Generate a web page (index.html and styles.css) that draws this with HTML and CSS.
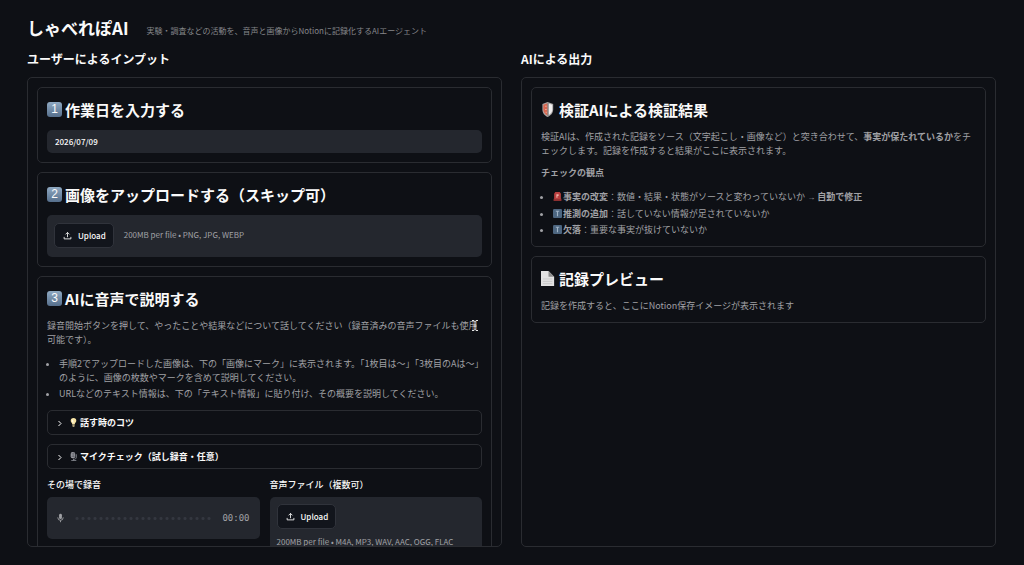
FILE: index.html
```html
<!DOCTYPE html>
<html lang="ja">
  <head>
    <meta charset="UTF-8" />
    <meta name="viewport" content="width=device-width, initial-scale=1.0" />
    <title>しゃべれぽAI</title>
    <link rel="stylesheet" href="styles.css">
  </head>
  <body>
    <header class="header">
      <h1>しゃべれぽAI</h1>
      <p>実験・調査などの活動を、音声と画像からNotionに記録化するAIエージェント</p>
    </header>

    <main class="columns">
      <section class="column">
        <h2>ユーザーによるインプット</h2>
        <div class="panel">
          <div class="card">
            <h3><span class="keycap">1</span><label for="workDate">作業日を入力する</label></h3>
            <input class="date-input" id="workDate" type="text" value="2026/07/09" />
          </div>

          <div class="card">
            <h3><span class="keycap">2</span>画像をアップロードする（スキップ可）</h3>
            <div class="uploader">
              <button class="btn" type="button">
                <svg viewBox="0 0 16 16" aria-hidden="true"><path d="M8 11V2.5M4.5 6L8 2.5 11.5 6M2 10.5V14h12v-3.5" /></svg>
                Upload
              </button>
              <span>200MB per file • PNG, JPG, WEBP</span>
            </div>
          </div>

          <div class="card">
            <h3><span class="keycap">3</span>AIに音声で説明する</h3>
            <div class="text">
              <p>録音開始ボタンを押して、やったことや結果などについて話してください（録音済みの音声ファイルも使用可能です）。</p>
              <ul>
                <li>手順2でアップロードした画像は、下の「画像にマーク」に表示されます。「1枚目は〜」「3枚目のAは〜」のように、画像の枚数やマークを含めて説明してください。</li>
                <li>URLなどのテキスト情報は、下の「テキスト情報」に貼り付け、その概要を説明してください。</li>
              </ul>
              <svg class="cursor" viewBox="0 0 8 13" aria-hidden="true"><path d="M1 1.5h2l1 1 1-1h2M4 2.5v8M1 11.5h2l1-1 1 1h2M2.5 7h3" /></svg>
            </div>

            <details class="expander">
              <summary>
                <svg class="chevron" viewBox="0 0 8 8" aria-hidden="true"><path d="M2.5 2L5 4.500 2.5 7" /></svg>
                <svg class="emoji" viewBox="0 0 16 16" aria-hidden="true">
                  <path fill="#f7e3a4" d="M8 0a5 5 0 0 0-5 5c0 2.600 2.500 3.500 2.800 6h4.400C10.500 8.500 13 7.600 13 5a5 5 0 0 0-5-5z" />
                  <path fill="#fffbe8" d="M7 2a3 3 0 0 0-2 3c0 1.500 1.500 2.500 2 4h1z" />
                  <path fill="#a99c78" d="M6 11h4v3.500L9 16H7l-1-1.500z" />
                </svg>
                話す時のコツ
              </summary>
            </details>

            <details class="expander">
              <summary>
                <svg class="chevron" viewBox="0 0 8 8" aria-hidden="true"><path d="M2.5 2L5 4.500 2.5 7" /></svg>
                <svg class="emoji" viewBox="0 0 16 16" aria-hidden="true">
                  <rect x="3" y="0" width="8" height="11" rx="3.500" fill="#a4a5ab" />
                  <path stroke="#55575e" d="M4 3h7M4 5.500h7M4 8h7M7.500 0v10" />
                  <path fill="none" stroke="#8b8d94" stroke-width="1.500" d="M13 4v5c0 3-2 4-5 4M8 12v3M4 15.200h9" />
                </svg>
                マイクチェック（試し録音・任意）
              </summary>
            </details>

            <div class="record-row">
              <div class="field">
                <h4>その場で録音</h4>
                <div class="recorder">
                  <button class="mic" type="button" aria-label="録音">
                    <svg viewBox="0 0 10 14" aria-hidden="true">
                      <rect x="3" y="1" width="4" height="7.500" rx="2" />
                      <path d="M1.200 6v.5a3.800 3.800 0 0 0 7.600 0V6M5 10.500V13" />
                    </svg>
                  </button>
                  <span class="wave"></span>
                  <span class="time">00:00</span>
                </div>
              </div>
              <div class="field">
                <h4>音声ファイル（複数可）</h4>
                <div class="uploader stacked">
                  <button class="btn" type="button">
                    <svg viewBox="0 0 16 16" aria-hidden="true"><path d="M8 11V2.5M4.5 6L8 2.5 11.5 6M2 10.5V14h12v-3.5" /></svg>
                    Upload
                  </button>
                  <span>200MB per file • M4A, MP3, WAV, AAC, OGG, FLAC</span>
                </div>
              </div>
            </div>
          </div>
        </div>
      </section>

      <section class="column">
        <h2>AIによる出力</h2>
        <div class="panel">
          <div class="card">
            <h3>
              <svg class="icon" viewBox="0 0 16 16" aria-hidden="true">
                <path fill="#a9a5a4" d="M7 0l6 2v6c0 4-3 6.500-6 8-3-1.500-5.500-4-5.500-8V2z" />
                <path fill="#d9664f" d="M7 1.300V14.500C4.500 13 2.500 11 2.500 8V2.900z" />
                <path fill="#f0eeee" d="M8 1.500V14C10.500 12.500 12 10.500 12 8V2.900z" />
                <path stroke="#f0b8aa" d="M4.500 4.500H6M4.500 8H6M5 11h1" />
                <path stroke="#777" d="M7.500 1v14" />
              </svg>検証AIによる検証結果
            </h3>
            <div class="text">
              <p>検証AIは、作成された記録をソース（文字起こし・画像など）と突き合わせて、<strong>事実が保たれているか</strong>をチェックします。記録を作成すると結果がここに表示されます。</p>
              <p><strong>チェックの観点</strong></p>
              <ul>
                <li>
                  <svg class="emoji" viewBox="0 0 16 16" aria-hidden="true">
                    <path fill="#8d2f30" d="M1 12h14v4H1z" />
                    <path fill="#b83f3f" d="M2 13V3l2-3h8l2 3v10z" />
                    <path fill="#eeb3a8" d="M6 4h4v3H8v3H6z" />
                  </svg><strong>事実の改変</strong>：数値・結果・状態がソースと変わっていないか<span class="arrow">→</span><strong>自動で修正</strong>
                </li>
                <li>
                  <svg class="emoji" viewBox="0 0 16 16" aria-hidden="true">
                    <rect width="16" height="16" rx="2" fill="#4d6680" />
                    <path stroke="#9fb2c4" stroke-width="2" d="M5 4h6M8 4v9" />
                  </svg><strong>推測の追加</strong>：話していない情報が足されていないか
                </li>
                <li>
                  <svg class="emoji" viewBox="0 0 16 16" aria-hidden="true">
                    <rect width="16" height="16" rx="2" fill="#4d6680" />
                    <path stroke="#9fb2c4" stroke-width="2" d="M5 4h6M8 4v9" />
                  </svg><strong>欠落</strong>：重要な事実が抜けていないか
                </li>
              </ul>
            </div>
          </div>

          <div class="card">
            <h3>
              <svg class="icon" viewBox="0 0 16 16" aria-hidden="true">
                <path fill="#e2e2e2" d="M0 0h8l6 6v10H0z" />
                <path fill="#8b8b8b" d="M8 0l6 6H8z" />
                <path stroke="#c8c8c8" d="M2 8.500h10M2 11h10M2 13.500h10" />
              </svg>記録プレビュー
            </h3>
            <div class="text">
              <p>記録を作成すると、ここにNotion保存イメージが表示されます</p>
            </div>
          </div>
        </div>
      </section>
    </main>
  </body>
</html>
```

FILE: styles.css
```css
* {
  box-sizing: border-box;
}
body {
  display: flex;
  flex-direction: column;
  height: 100vh;
  margin: 0;
  padding: 14px 28px 18px 27px;
  font-family: "Noto Sans CJK JP", sans-serif;
  font-size: 9px;
  line-height: 14px;
  background-color: #0e1015;
  color: #fafafa;
}
h1,
h2,
h3,
h4,
p,
ul {
  margin: 0;
}
button,
input {
  font-family: inherit;
  font-size: 8px;
  color: inherit;
}
.header {
  display: flex;
  align-items: center;
  gap: 18px;
  height: 28px;
}
.header h1 {
  font-size: 17px;
  line-height: 28px;
}
.header p {
  padding-top: 5px;
  font-size: 8px;
  color: #85868a;
}

/* Two scrolling columns */
.columns {
  display: grid;
  grid-template-columns: 1fr 1fr;
  gap: 19px;
  flex: 1;
  min-height: 0;
}
.column {
  display: flex;
  flex-direction: column;
  min-width: 0;
  min-height: 0;
}
.column h2 {
  height: 35px;
  font-size: 12px;
  line-height: 34px;
}
.panel {
  display: flex;
  flex-direction: column;
  gap: 9px;
  flex: 1;
  min-height: 0;
  padding: 9px;
  border: 1px solid #2a2c31;
  border-radius: 5px;
  overflow-y: auto;
  scrollbar-width: none;
}
.card {
  flex-shrink: 0;
  padding: 9px;
  border: 1px solid #2a2c31;
  border-radius: 5px;
}
.card h3 {
  display: flex;
  align-items: center;
  gap: 3px;
  height: 33px;
  padding-bottom: 8px;
  font-size: 15px;
  line-height: 24px;
}
.icon {
  width: 15px;
  height: 15px;
}
.keycap {
  width: 15px;
  height: 15px;
  border-radius: 3px;
  background: linear-gradient(#8fa9c2, #566f8c);
  font-family: "Liberation Sans", sans-serif;
  font-size: 12px;
  font-weight: normal;
  line-height: 15px;
  text-align: center;
}
.emoji {
  width: 9px;
  height: 9px;
  flex-shrink: 0;
}

/* Inputs */
.date-input {
  display: block;
  width: 100%;
  height: 23px;
  padding: 0 8px;
  border: none;
  border-radius: 5px;
  background-color: #24272e;
  font-weight: 500;
}
.uploader {
  display: flex;
  align-items: center;
  gap: 10px;
  height: 42px;
  padding: 0 7px 2px;
  border-radius: 5px;
  background-color: #24272e;
  font-size: 8px;
  color: #a0a1a5;
  white-space: nowrap;
}
.uploader.stacked {
  flex-direction: column;
  align-items: flex-start;
  gap: 6px;
  height: 62px;
  padding-top: 7px;
}
.btn {
  display: flex;
  align-items: center;
  gap: 6px;
  flex-shrink: 0;
  height: 25px;
  padding: 0 7px 0 8px;
  border: 1px solid #30333b;
  border-radius: 5px;
  background-color: #12151c;
  color: #fafafa;
  font-weight: 500;
  cursor: pointer;
}
.btn svg {
  width: 9px;
  height: 9px;
}
.btn path {
  fill: none;
  stroke: #fafafa;
  stroke-width: 1.5;
}

/* Explanations */
.text {
  position: relative;
  color: #a0a1a5;
}
.text p + p {
  margin-top: 8px;
}
.text ul {
  margin-top: 10px;
  padding-left: 12px;
}
.text li + li {
  margin-top: 2px;
}
.text .emoji {
  margin-right: 1px;
  vertical-align: -1px;
}
.arrow {
  margin: 0 2px;
  font-family: "Liberation Sans", sans-serif;
  font-size: 8px;
}
.cursor {
  position: absolute;
  top: 0;
  right: 3px;
  width: 8px;
  height: 13px;
}
.cursor path {
  fill: none;
  stroke: #e4e4e4;
}

.expander {
  margin-top: 9px;
  border: 1px solid #2a2c31;
  border-radius: 5px;
}
.expander summary {
  display: flex;
  align-items: center;
  gap: 2px;
  height: 23px;
  padding: 0 8px;
  font-weight: bold;
  list-style: none;
  cursor: pointer;
}
.chevron {
  width: 8px;
  height: 8px;
  margin-right: 3px;
}
.chevron path {
  fill: none;
  stroke: #fafafa;
}

.record-row {
  display: grid;
  grid-template-columns: 1fr 1fr;
  gap: 10px;
  margin-top: 9px;
}
.field {
  min-width: 0;
}
.field h4 {
  height: 19px;
  font-size: 9px;
  font-weight: 500;
  line-height: 14px;
}
.recorder {
  display: flex;
  align-items: center;
  gap: 10px;
  height: 42px;
  padding: 0 10px;
  border-radius: 5px;
  background-color: #24272e;
  color: #a0a1a5;
}
.mic {
  width: 7px;
  height: 10px;
  padding: 0;
  border: none;
  background: none;
  cursor: pointer;
}
.mic svg {
  display: block;
  width: 7px;
  height: 10px;
}
.mic rect {
  fill: #a0a1a5;
}
.mic path {
  fill: none;
  stroke: #a0a1a5;
  stroke-width: 1.3;
}
.wave {
  flex: 1;
  height: 3px;
  background: radial-gradient(circle, #343740 1px, transparent 2px) 0 0 / 6px 3px;
}
.time {
  font-family: "DejaVu Sans Mono", monospace;
}
```
